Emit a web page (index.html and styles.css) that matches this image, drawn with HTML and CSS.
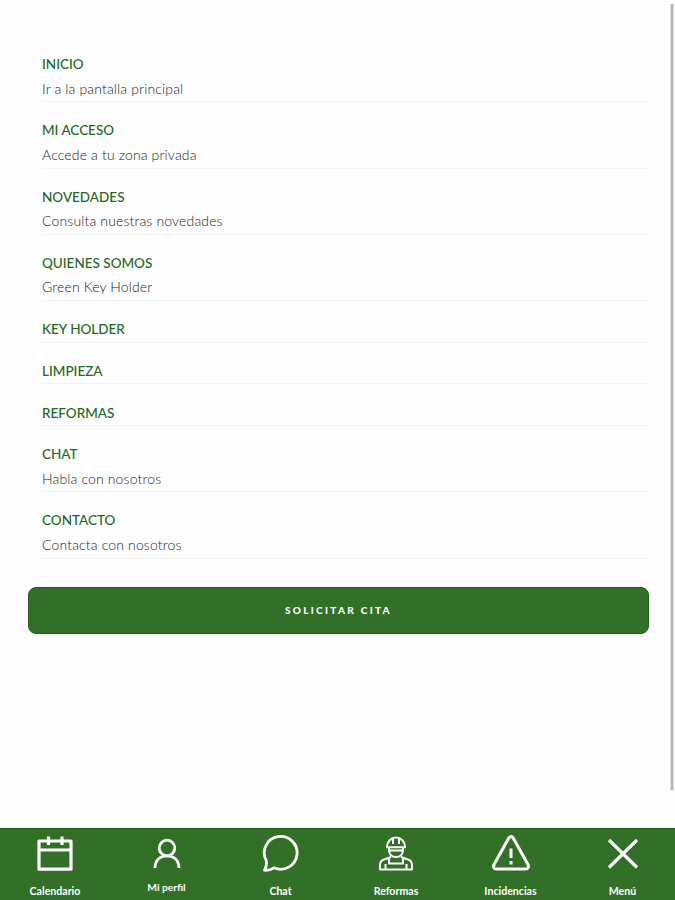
FILE: index.html
```html
<!DOCTYPE html>
<html lang="es">
<head>
  <meta charset="UTF-8">
  <meta name="viewport" content="width=device-width, initial-scale=1.0">
  <title>Green Key Holder</title>
  <link rel="stylesheet" href="styles.css">
</head>
<body>
  <div class="page">
    <main class="content">
      <ul class="menu">
        <li class="menu-item"><h2>INICIO</h2><p>Ir a la pantalla principal</p></li>
        <li class="menu-item"><h2>MI ACCESO</h2><p>Accede a tu zona privada</p></li>
        <li class="menu-item"><h2>NOVEDADES</h2><p>Consulta nuestras novedades</p></li>
        <li class="menu-item"><h2>QUIENES SOMOS</h2><p>Green Key Holder</p></li>
        <li class="menu-item"><h2>KEY HOLDER</h2></li>
        <li class="menu-item"><h2>LIMPIEZA</h2></li>
        <li class="menu-item"><h2>REFORMAS</h2></li>
        <li class="menu-item"><h2>CHAT</h2><p>Habla con nosotros</p></li>
        <li class="menu-item"><h2>CONTACTO</h2><p>Contacta con nosotros</p></li>
      </ul>
      <button class="cita">SOLICITAR CITA</button>
    </main>
    <div class="scrollbar"></div>
  </div>

  <nav class="tabs">
    <a class="tab">
      <svg width="40" height="40" viewBox="0 0 40 40" stroke-width="3.200">
        <path d="M4 7H36V35.200H4ZM4 16H36M13.500 2.500V11M27 2.500V11"/>
      </svg>
      <span>Calendario</span>
    </a>
    <a class="tab tab-perfil">
      <svg width="40" height="40" viewBox="0 0 40 40" stroke-width="2.800">
        <circle cx="20" cy="14" r="7.800"/>
        <path d="M8 34C8 26.500 13 21.800 20 21.800S32 26.500 32 34"/>
      </svg>
      <span>Mi perfil</span>
    </a>
    <a class="tab">
      <svg width="40" height="40" viewBox="0 0 40 40" stroke-width="2.800">
        <path d="M5.200 26.500A16.400 16.400 0 1 1 13 33.800C10.500 35.500 7.500 36.500 3.500 36.200C5.300 33 6 30 5.200 26.500Z"/>
      </svg>
      <span>Chat</span>
    </a>
    <a class="tab">
      <svg width="40" height="40" viewBox="0 0 40 40" stroke-width="2">
        <path d="M11 13C11 7.500 15 3.500 20 3.500S29 7.500 29 13M10 13.200H30M17 5V10M23 5V10"/>
        <path d="M13 14V16C13 20.500 16 23 20 23S27 20.500 27 16V14M14 16.500H26"/>
        <path d="M15 23L8 25.500Q4 27 4 31V35.500H36V31Q36 27 32 25.500L25 23M13 24.500V29.500H27V24.500M9.500 30V35M30.500 30V35"/>
      </svg>
      <span>Reformas</span>
    </a>
    <a class="tab">
      <svg width="40" height="40" viewBox="0 0 40 40" stroke-width="3">
        <path d="M17.800 4Q20 1 22.200 4L37 30.500Q38.500 35 34.500 35H5.500Q1.500 35 3 30.500Z"/>
        <path d="M20 14.500V24M20 27V30.500"/>
      </svg>
      <span>Incidencias</span>
    </a>
    <a class="tab">
      <svg width="40" height="40" viewBox="0 0 40 40" stroke-width="3.200">
        <path d="M6 6L34 33.500M34 6L6 33.500"/>
      </svg>
      <span>Menú</span>
    </a>
  </nav>
</body>
</html>
```
FILE: styles.css
```css
* {
  box-sizing: border-box;
}

body {
  margin: 0;
  height: 900px;
  display: flex;
  flex-direction: column;
  background: #fefefe;
  font-family: Lato, "Open Sans", sans-serif;
  overflow: hidden;
}

.page {
  flex: 1;
  display: flex;
  justify-content: space-between;
}

.content {
  width: 649px;
  padding: 36px 0 0 28px;
}

.menu {
  list-style: none;
  margin: 0;
  padding: 0 0 0 14px;
}

.menu-item {
  padding-top: 16.200px;
  border-bottom: 1px solid #f3f3f3;
}

.menu-item h2 {
  margin: 0;
  font-size: 13.500px;
  font-weight: 500;
  line-height: 24.400px;
  color: #216a1b;
}

.menu-item p {
  margin: 0;
  font-size: 14px;
  font-weight: 300;
  line-height: 24.700px;
  letter-spacing: 0.150px;
  color: #222;
}

.cita {
  display: block;
  width: 621px;
  height: 47px;
  margin-top: 28px;
  padding: 0;
  border: 1px solid #1c6410;
  border-radius: 8px;
  background: #326f27;
  color: #fff;
  font-family: inherit;
  font-size: 10px;
  font-weight: 900;
  letter-spacing: 2.300px;
}

.scrollbar {
  width: 4px;
  height: 786px;
  margin: 4px 1px 0 0;
  background: #b5b5b5;
  border-left: 1px solid #ddd;
  border-right: 1px solid #ddd;
}

.tabs {
  height: 72px;
  display: grid;
  grid-template-columns: 110px 113px 115px 116px 113px 111px;
  padding-top: 5px;
  background: #326f27;
  border-top: 1px solid #1c6410;
}

.tab {
  display: flex;
  flex-direction: column;
  align-items: center;
  gap: 10px;
  color: #fff;
  font-size: 10.600px;
  font-weight: 700;
  line-height: 14px;
}

.tab svg {
  fill: none;
  stroke: #fff;
  stroke-linejoin: round;
}

.tab-perfil {
  gap: 6px;
  font-size: 10.200px;
}
```
